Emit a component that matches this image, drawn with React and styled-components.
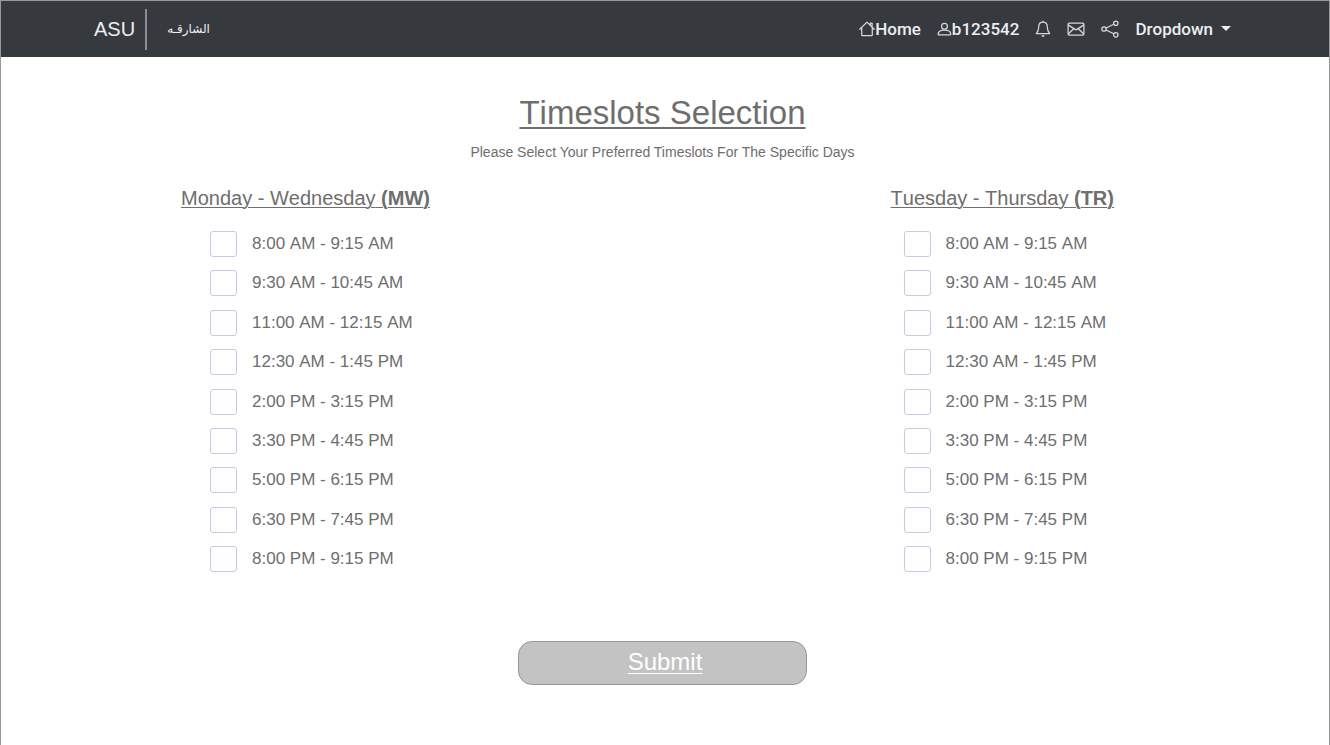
import React from "react";
import styled, { createGlobalStyle } from "styled-components";

const GlobalStyle = createGlobalStyle`
  * { box-sizing: border-box; }
  body {
    margin: 0;
    background: #fff;
    color: #6e6e6e;
    font-family: "Liberation Sans", Arial, sans-serif;
    font-kerning: none;
  }
`;

const Page = styled.div`
  min-height: 100vh;
  border: 1px solid #979a9b;
  border-bottom: 0;
`;

const Navbar = styled.header`
  display: flex;
  align-items: center;
  justify-content: space-between;
  height: 56px;
  padding: 0 98px 0 93px;
  background: #363a3f;
  color: #eceeef;
`;

const Brand = styled.a`
  display: flex;
  align-items: center;
  color: inherit;
  font-size: 20px;
  text-decoration: none;
`;

const BrandName = styled.span`
  padding-right: 10px;
  border-right: 2px solid #8d9093;
  line-height: 41px;
`;

const BrandArabic = styled.span`
  padding-left: 20px;
  font-family: "DejaVu Sans", sans-serif;
  font-size: 12px;
`;

const Nav = styled.nav`
  display: flex;
  align-items: center;
  gap: 16px;
  font-family: Roboto, sans-serif;
  font-size: 17px;
  font-weight: 500;
`;

const NavLink = styled.a`
  display: flex;
  align-items: center;
  color: inherit;
  text-decoration: none;
`;

const IconSvg = styled.svg`
  flex: none;
  fill: none;
  stroke: #d5d8da;
  stroke-width: 1.25;
  stroke-linejoin: round;
  stroke-linecap: round;
`;

const DropdownButton = styled.button`
  display: flex;
  align-items: center;
  gap: 8px;
  padding: 0;
  border: 0;
  background: none;
  color: inherit;
  font: inherit;
  cursor: pointer;

  &::after {
    content: "";
    margin-bottom: 2px;
    border: 5px solid transparent;
    border-top-color: currentColor;
    border-bottom: 0;
  }
`;

const Form = styled.form`
  display: flex;
  flex-direction: column;
  align-items: center;
  padding: 36px 5px 60px 0;
`;

const Title = styled.h1`
  margin: 0;
  font-size: 33px;
  font-weight: 400;
  line-height: 40px;
  text-decoration: underline;
  text-decoration-thickness: 2px;
  text-underline-offset: 3px;
`;

const Subtitle = styled.p`
  margin: 9px 0 0;
  font-size: 14px;
  font-kerning: normal;
  line-height: 20px;
`;

const Days = styled.div`
  display: flex;
  justify-content: space-between;
  width: 100%;
  margin-top: 23px;
  padding: 0 210px 0 180px;
`;

const DayGroup = styled.fieldset`
  min-width: 0;
  margin: 0;
  padding: 0;
  border: 0;
`;

const DayHeading = styled.legend`
  padding: 0;
  font-size: 20px;
  line-height: 26px;
  text-decoration: underline;
  text-decoration-thickness: 1px;
  text-underline-offset: 2px;
`;

const SlotList = styled.ul`
  display: flex;
  flex-direction: column;
  justify-content: space-between;
  min-height: 341px;
  margin: 20px 0 0;
  padding: 0 0 0 ${(p) => p.$indent}px;
  list-style: none;
`;

const Slot = styled.label`
  display: flex;
  align-items: center;
  gap: 15px;
  font-size: 17px;
  line-height: 26px;
`;

const Checkbox = styled.input`
  appearance: none;
  flex: none;
  width: 27px;
  height: 26px;
  margin: 0;
  border: 1px solid #c5cbe0;
  border-radius: 3px;
  background: #fff;

  &:checked { background: #c5cbe0; }
`;

const Submit = styled.button`
  width: 289px;
  height: 44px;
  margin-top: 69px;
  padding: 0 0 3px 5px;
  border: 1px solid #979797;
  border-radius: 14px;
  background: #c3c3c3;
  color: #fff;
  font-family: inherit;
  font-size: 24px;
  text-decoration: underline;
  text-decoration-thickness: 1px;
  text-underline-offset: 3px;
  cursor: pointer;
`;

const slots = [
  "8:00 AM - 9:15 AM",
  "9:30 AM - 10:45 AM",
  "11:00 AM - 12:15 AM",
  "12:30 AM - 1:45 PM",
  "2:00 PM - 3:15 PM",
  "3:30 PM - 4:45 PM",
  "5:00 PM - 6:15 PM",
  "6:30 PM - 7:45 PM",
  "8:00 PM - 9:15 PM",
];

const days = [
  { code: "MW", name: "Monday - Wednesday", indent: 29 },
  { code: "TR", name: "Tuesday - Thursday", indent: 13 },
];

function Icon({ width, height = 18, children }) {
  return (
    <IconSvg width={width} height={height} viewBox={`0 0 ${width} ${height}`} aria-hidden="true">
      {children}
    </IconSvg>
  );
}

const HouseIcon = () => (
  <Icon width={16}>
    <path d="M0.8 9.3L8 2.1L15.2 9.3M2.7 7.8V14.9Q2.7 15.7 3.5 15.7H12.5Q13.3 15.7 13.3 14.9V7.8M11.3 5V3H13.1V7" />
  </Icon>
);

const PersonIcon = () => (
  <Icon width={15}>
    <circle cx="7.5" cy="6.2" r="2.9" />
    <path d="M1.2 14.2C1.2 11.4 3.6 10.2 7.5 10.2S13.8 11.4 13.8 14.2Q13.8 14.9 13.1 14.9H1.9Q1.2 14.9 1.2 14.2Z" />
  </Icon>
);

const BellIcon = () => (
  <Icon width={16}>
    <path d="M8 2.2C5 2.2 3.7 4.4 3.7 7C3.7 10.6 2.6 12.2 1.3 13.6H14.7C13.4 12.2 12.3 10.6 12.3 7C12.3 4.4 11 2.2 8 2.2ZM8 1.1V2.2" />
    <path d="M6.3 15.3H9.7Q9.4 16.9 8 16.9T6.3 15.3Z" fill="#d5d8da" stroke="none" />
  </Icon>
);

const EnvelopeIcon = () => (
  <Icon width={18}>
    <rect x="1.1" y="3.1" width="15.8" height="11.9" rx="1.3" />
    <path d="M1.4 5.1L9 9.9L16.6 5.1M1.5 13.7L6.7 8.7M16.5 13.7L11.3 8.7" />
  </Icon>
);

const ShareIcon = () => (
  <Icon width={18}>
    <circle cx="3" cy="9" r="2.2" />
    <circle cx="14.8" cy="3.2" r="2.2" />
    <circle cx="14.8" cy="14.8" r="2.2" />
    <path d="M5 8L12.8 4.2M5 10L12.8 13.8" />
  </Icon>
);

export default function App() {
  return (
    <Page>
      <GlobalStyle />
      <Navbar>
        <Brand href="#">
          <BrandName>ASU</BrandName>
          <BrandArabic lang="ar">الشارقـه</BrandArabic>
        </Brand>
        <Nav>
          <NavLink href="#"><HouseIcon />Home</NavLink>
          <NavLink href="#"><PersonIcon />b123542</NavLink>
          <NavLink href="#" aria-label="Notifications"><BellIcon /></NavLink>
          <NavLink href="#" aria-label="Messages"><EnvelopeIcon /></NavLink>
          <NavLink href="#" aria-label="Share"><ShareIcon /></NavLink>
          <DropdownButton type="button">Dropdown</DropdownButton>
        </Nav>
      </Navbar>
      <Form onSubmit={(e) => e.preventDefault()}>
        <Title>Timeslots Selection</Title>
        <Subtitle>Please Select Your Preferred Timeslots For The Specific Days</Subtitle>
        <Days>
          {days.map((day) => (
            <DayGroup key={day.code}>
              <DayHeading>
                {day.name} <b>({day.code})</b>
              </DayHeading>
              <SlotList $indent={day.indent}>
                {slots.map((slot) => (
                  <li key={slot}>
                    <Slot>
                      <Checkbox type="checkbox" name={day.code} value={slot} />
                      {slot}
                    </Slot>
                  </li>
                ))}
              </SlotList>
            </DayGroup>
          ))}
        </Days>
        <Submit type="submit">Submit</Submit>
      </Form>
    </Page>
  );
}
